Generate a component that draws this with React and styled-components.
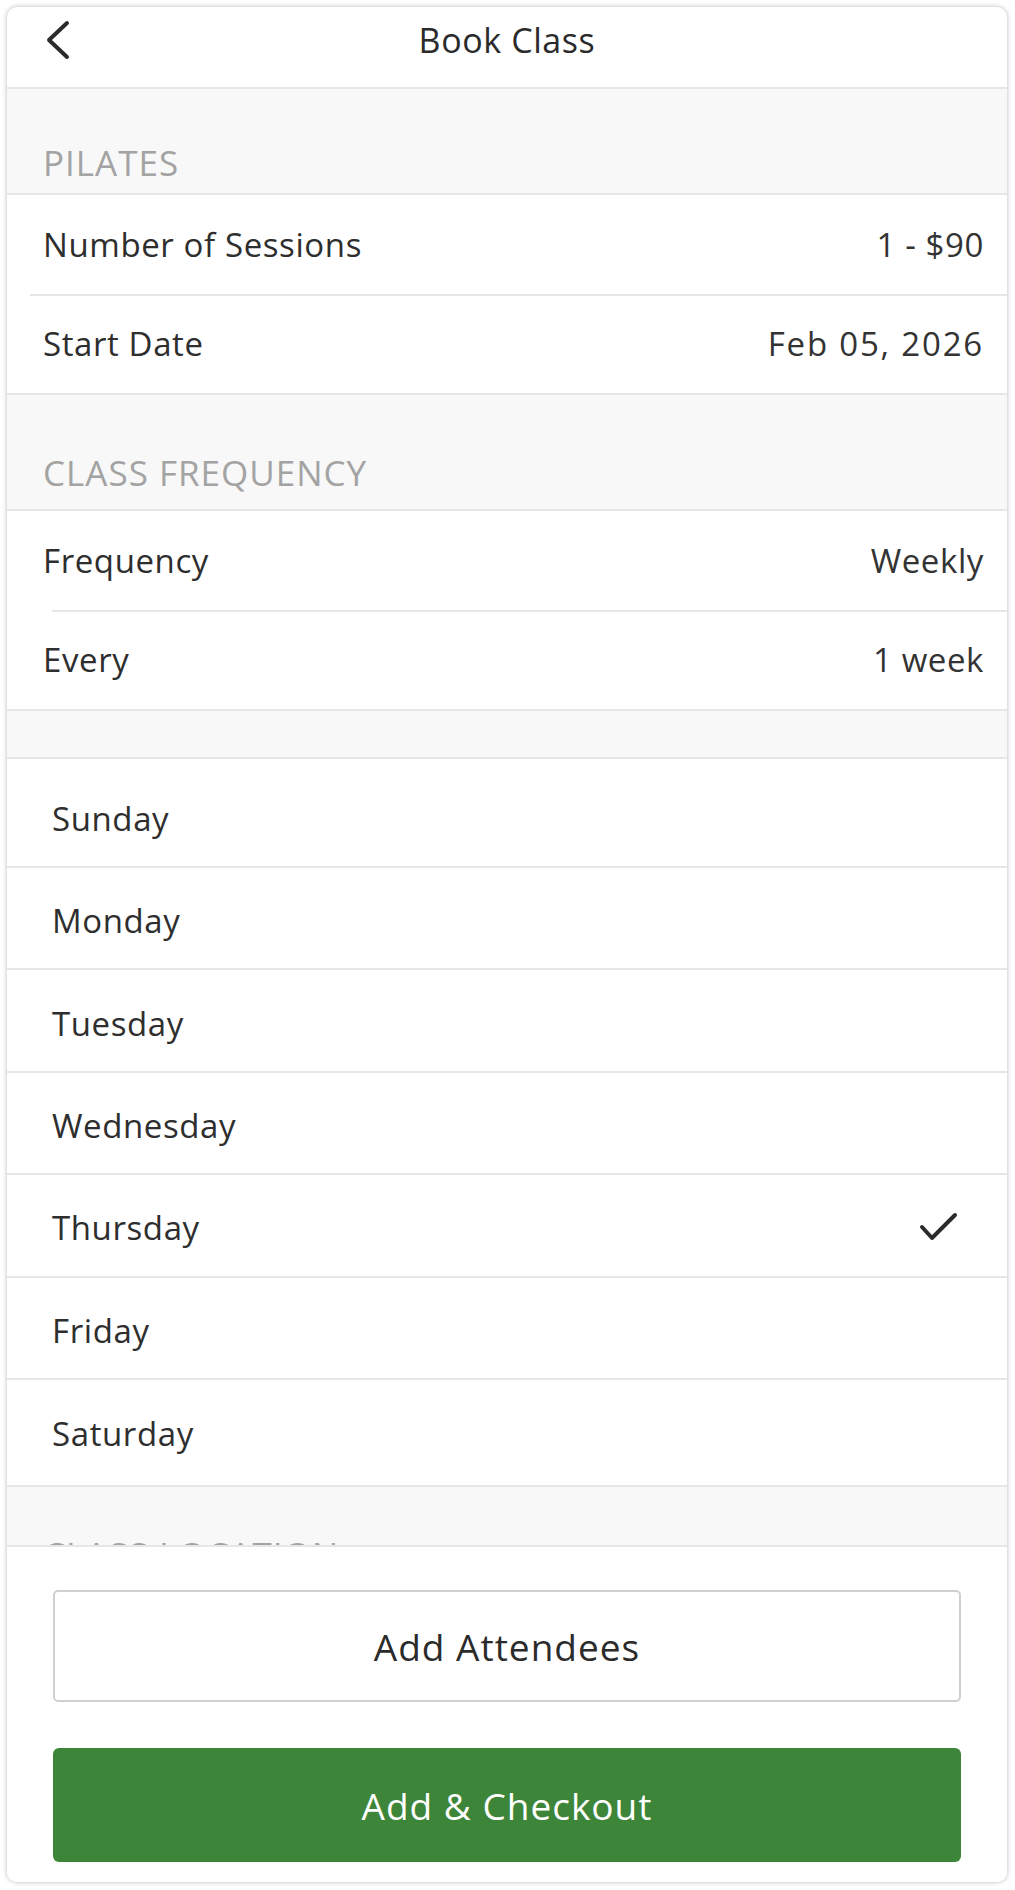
import React from 'react'
import styled, { createGlobalStyle } from 'styled-components'

const GlobalStyle = createGlobalStyle`
    body {
        margin: 0;
        background: #fff;
        font-family: 'Open Sans', 'Liberation Sans', sans-serif;
        color: #333;
    }
`

const days = ['Sunday', 'Monday', 'Tuesday', 'Wednesday', 'Thursday', 'Friday', 'Saturday']

const BookClass = () => {
    return (
        <Page>
            <GlobalStyle />
            <Card>
                <Header>
                    <BackButton aria-label='Back'>
                        <svg width='30' height='40' viewBox='0 0 30 40' fill='none'>
                            <polyline points='22,3 4,20 22,37' stroke='#2b2b2b' strokeWidth='4' strokeLinecap='round' strokeLinejoin='round' />
                        </svg>
                    </BackButton>
                    <Title>Book Class</Title>
                    <span />
                </Header>

                <Scroll>
                    <SectionLabel height={104} pad={12}>PILATES</SectionLabel>
                    <Group>
                        <Row inset={23}>
                            <RowLabel>Number of Sessions</RowLabel>
                            <RowValue>1 - $90</RowValue>
                        </Row>
                        <Row>
                            <RowLabel>Start Date</RowLabel>
                            <RowValue wide>Feb 05, 2026</RowValue>
                        </Row>
                    </Group>

                    <SectionLabel height={114} pad={18}>CLASS FREQUENCY</SectionLabel>
                    <Group>
                        <Row inset={45}>
                            <RowLabel>Frequency</RowLabel>
                            <RowValue>Weekly</RowValue>
                        </Row>
                        <Row>
                            <RowLabel>Every</RowLabel>
                            <RowValue>1 week</RowValue>
                        </Row>
                    </Group>

                    <Spacer />
                    <Group>
                        {days.map((day) => (
                            <DayRow key={day}>
                                <DayName>{day}</DayName>
                                {day === 'Thursday' && (
                                    <svg width='40' height='32' viewBox='0 0 40 32' fill='none'>
                                        <polyline points='3,15 13,26 36,3' stroke='#2b2b2b' strokeWidth='4' strokeLinecap='round' strokeLinejoin='round' />
                                    </svg>
                                )}
                            </DayRow>
                        ))}
                    </Group>

                    <SectionLabel height={104} pad={18}>CLASS LOCATION</SectionLabel>
                </Scroll>

                <Footer>
                    <OutlineButton>Add Attendees</OutlineButton>
                    <PrimaryButton>Add &amp; Checkout</PrimaryButton>
                </Footer>
            </Card>
        </Page>
    )
}

export default BookClass

const Page = styled.div`
    padding: 7px 8px 8px 7px;
`

const Card = styled.div`
    width: 1000px;
    height: 1875px;
    display: flex;
    flex-direction: column;
    background: #fff;
    border-radius: 10px;
    box-shadow: 0 0 5px rgba(0, 0, 0, 0.28);
    overflow: hidden;
`

const Header = styled.header`
    flex: none;
    height: 66px;
    padding-bottom: 14px;
    display: grid;
    grid-template-columns: 120px 1fr 120px;
    align-items: center;
    border-bottom: 2px solid #e6e6e6;
`

const BackButton = styled.button`
    border: none;
    background: none;
    padding: 0 0 0 38px;
    display: flex;
    align-items: center;
    cursor: pointer;
`

const Title = styled.h1`
    margin: 0;
    text-align: center;
    font-size: 34px;
    font-weight: 400;
    letter-spacing: 0.6px;
    color: #2b2b2b;
`

const Scroll = styled.div`
    flex: 1;
    overflow: hidden;
    background: #f8f8f8;
`

const SectionLabel = styled.div`
    height: ${(p) => p.height}px;
    box-sizing: border-box;
    display: flex;
    align-items: flex-end;
    padding: 0 0 ${(p) => p.pad}px 36px;
    font-size: 35px;
    line-height: 36px;
    letter-spacing: 1px;
    color: #a3a3a3;
`

const Group = styled.div`
    background: #fff;
    border-top: 2px solid #e6e6e6;
    border-bottom: 2px solid #e6e6e6;
`

const Row = styled.div`
    height: 99px;
    display: flex;
    align-items: center;
    justify-content: space-between;
    padding: 0 23px 0 36px;
    position: relative;
    font-size: 33px;
    letter-spacing: 0.6px;

    & + & {
        border-top: 2px solid #e6e6e6;
    }

    ${(p) => p.inset && `
        & + & { border-top: none; }
        &::after {
            content: '';
            position: absolute;
            left: ${p.inset}px;
            right: 0;
            bottom: -2px;
            height: 2px;
            background: #e6e6e6;
        }
    `}
`

const RowLabel = styled.span`
    color: #2e2e2e;
`

const RowValue = styled.span`
    color: #333;
    letter-spacing: ${(p) => (p.wide ? '1.8px' : 'inherit')};
`

const Spacer = styled.div`
    height: 46px;
`

const DayRow = styled.div`
    box-sizing: border-box;
    height: 102.4px;
    display: flex;
    align-items: center;
    justify-content: space-between;
    padding: 5px 48px 0 45px;
    font-size: 33px;
    letter-spacing: 0.6px;

    & + & {
        border-top: 2px solid #e6e6e6;
    }

    &:first-child {
        height: 107px;
        padding-top: 12px;
    }

    &:last-child {
        height: 107px;
        padding-top: 3px;
    }
`

const DayName = styled.span`
    color: #2e2e2e;
`

const Footer = styled.div`
    flex: none;
    display: flex;
    flex-direction: column;
    gap: 46px;
    padding: 43px 46px 20px;
    border-top: 2px solid #e6e6e6;
    background: #fff;
`

const OutlineButton = styled.button`
    height: 112px;
    border: 2px solid #cfcfcf;
    border-radius: 5px;
    background: #fff;
    font-family: inherit;
    font-size: 37px;
    letter-spacing: 1px;
    color: #2b2b2b;
    cursor: pointer;
`

const PrimaryButton = styled.button`
    height: 114px;
    border: none;
    border-radius: 6px;
    background: #3d8539;
    font-family: inherit;
    font-size: 37px;
    letter-spacing: 1px;
    color: #fff;
    cursor: pointer;
`
